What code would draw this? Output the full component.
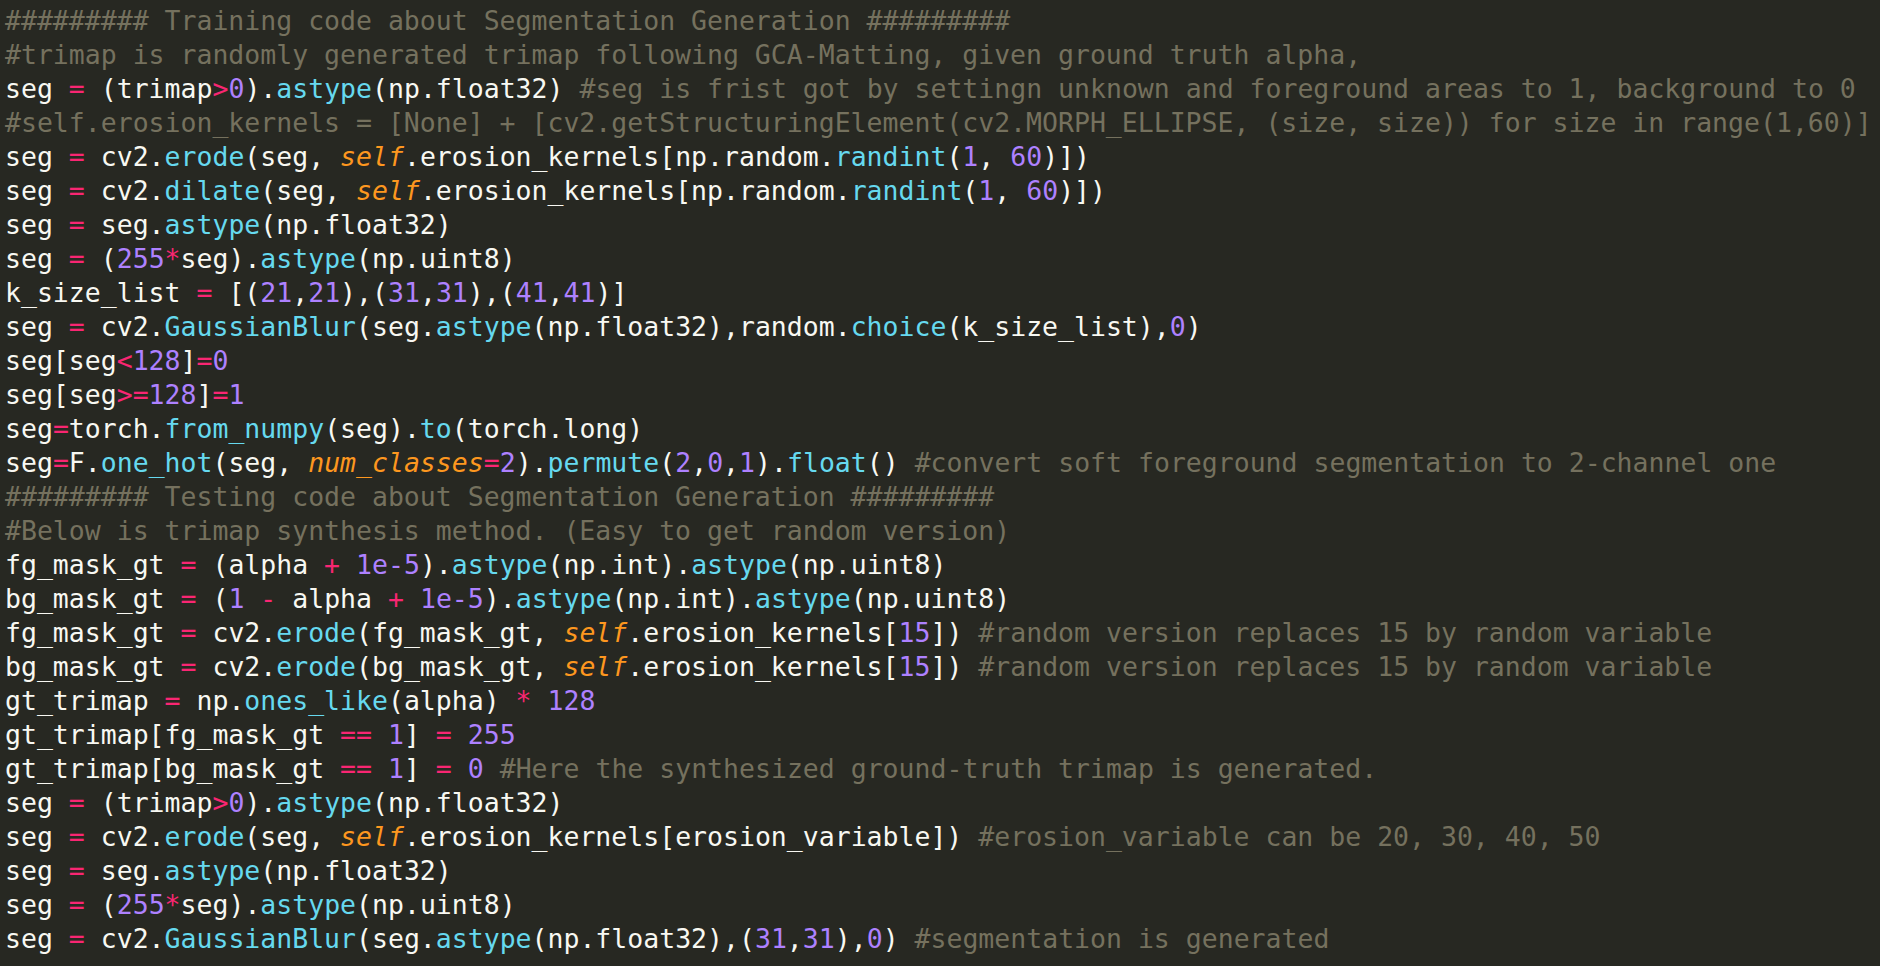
type Tok = [string, string]

const c = (t: string): Tok => ['c', t]
const k = (t: string): Tok => ['k', t]
const n = (t: string): Tok => ['n', t]
const f = (t: string): Tok => ['f', t]
const i = (t: string): Tok => ['i', t]
const p = (t: string): Tok => ['p', t]

const styles: Record<string, string> = {
  p: 'text-[#f8f8f2]',
  c: 'text-[#75715e]',
  k: 'text-[#f92672]',
  n: 'text-[#ae81ff]',
  f: 'text-[#66d9ef]',
  i: 'text-[#fd971f] italic',
}

const lines: Tok[][] = [
  [c('######### Training code about Segmentation Generation #########')],
  [c('#trimap is randomly generated trimap following GCA-Matting, given ground truth alpha,')],
  [p('seg '), k('='), p(' (trimap'), k('>'), n('0'), p(').'), f('astype'), p('(np.float32) '), c('#seg is frist got by settingn unknown and foreground areas to 1, background to 0')],
  [c('#self.erosion_kernels = [None] + [cv2.getStructuringElement(cv2.MORPH_ELLIPSE, (size, size)) for size in range(1,60)]')],
  [p('seg '), k('='), p(' cv2.'), f('erode'), p('(seg, '), i('self'), p('.erosion_kernels[np.random.'), f('randint'), p('('), n('1'), p(', '), n('60'), p(')])')],
  [p('seg '), k('='), p(' cv2.'), f('dilate'), p('(seg, '), i('self'), p('.erosion_kernels[np.random.'), f('randint'), p('('), n('1'), p(', '), n('60'), p(')])')],
  [p('seg '), k('='), p(' seg.'), f('astype'), p('(np.float32)')],
  [p('seg '), k('='), p(' ('), n('255'), k('*'), p('seg).'), f('astype'), p('(np.uint8)')],
  [p('k_size_list '), k('='), p(' [('), n('21'), p(','), n('21'), p('),('), n('31'), p(','), n('31'), p('),('), n('41'), p(','), n('41'), p(')]')],
  [p('seg '), k('='), p(' cv2.'), f('GaussianBlur'), p('(seg.'), f('astype'), p('(np.float32),random.'), f('choice'), p('(k_size_list),'), n('0'), p(')')],
  [p('seg[seg'), k('<'), n('128'), p(']'), k('='), n('0')],
  [p('seg[seg'), k('>='), n('128'), p(']'), k('='), n('1')],
  [p('seg'), k('='), p('torch.'), f('from_numpy'), p('(seg).'), f('to'), p('(torch.long)')],
  [p('seg'), k('='), p('F.'), f('one_hot'), p('(seg, '), i('num_classes'), k('='), n('2'), p(').'), f('permute'), p('('), n('2'), p(','), n('0'), p(','), n('1'), p(').'), f('float'), p('() '), c('#convert soft foreground segmentation to 2-channel one')],
  [c('######### Testing code about Segmentation Generation #########')],
  [c('#Below is trimap synthesis method. (Easy to get random version)')],
  [p('fg_mask_gt '), k('='), p(' (alpha '), k('+'), p(' '), n('1e-5'), p(').'), f('astype'), p('(np.int).'), f('astype'), p('(np.uint8)')],
  [p('bg_mask_gt '), k('='), p(' ('), n('1'), p(' '), k('-'), p(' alpha '), k('+'), p(' '), n('1e-5'), p(').'), f('astype'), p('(np.int).'), f('astype'), p('(np.uint8)')],
  [p('fg_mask_gt '), k('='), p(' cv2.'), f('erode'), p('(fg_mask_gt, '), i('self'), p('.erosion_kernels['), n('15'), p(']) '), c('#random version replaces 15 by random variable')],
  [p('bg_mask_gt '), k('='), p(' cv2.'), f('erode'), p('(bg_mask_gt, '), i('self'), p('.erosion_kernels['), n('15'), p(']) '), c('#random version replaces 15 by random variable')],
  [p('gt_trimap '), k('='), p(' np.'), f('ones_like'), p('(alpha) '), k('*'), p(' '), n('128')],
  [p('gt_trimap[fg_mask_gt '), k('=='), p(' '), n('1'), p('] '), k('='), p(' '), n('255')],
  [p('gt_trimap[bg_mask_gt '), k('=='), p(' '), n('1'), p('] '), k('='), p(' '), n('0'), p(' '), c('#Here the synthesized ground-truth trimap is generated.')],
  [p('seg '), k('='), p(' (trimap'), k('>'), n('0'), p(').'), f('astype'), p('(np.float32)')],
  [p('seg '), k('='), p(' cv2.'), f('erode'), p('(seg, '), i('self'), p('.erosion_kernels[erosion_variable]) '), c('#erosion_variable can be 20, 30, 40, 50')],
  [p('seg '), k('='), p(' seg.'), f('astype'), p('(np.float32)')],
  [p('seg '), k('='), p(' ('), n('255'), k('*'), p('seg).'), f('astype'), p('(np.uint8)')],
  [p('seg '), k('='), p(' cv2.'), f('GaussianBlur'), p('(seg.'), f('astype'), p('(np.float32),('), n('31'), p(','), n('31'), p('),'), n('0'), p(') '), c('#segmentation is generated')],
]

export default function App() {
  return (
    <div className="w-[1880px] h-[966px] overflow-hidden bg-[#272822] pl-[5px] pt-[4px] font-['DejaVu_Sans_Mono',monospace] text-[26.5px] leading-[34px] text-[#f8f8f2]">
      {lines.map((line, li) => (
        <div key={li} className="whitespace-pre">
          {line.map(([kind, text], ti) => (
            <span key={ti} className={styles[kind]}>
              {text}
            </span>
          ))}
        </div>
      ))}
    </div>
  )
}
